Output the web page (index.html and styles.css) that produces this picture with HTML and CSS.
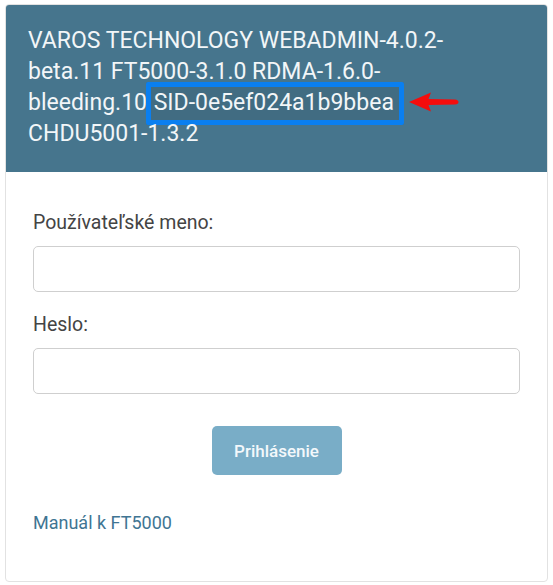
FILE: index.html
```html
<!DOCTYPE html>
<html lang="sk">
<head>
<meta charset="utf-8">
<link rel="stylesheet" href="styles.css">
</head>
<body>
<div class="card">
  <div class="card-header">
    <span class="line">VAROS TECHNOLOGY WEBADMIN-4.0.2-</span>
    <span class="line">beta.11 FT5000-3.1.0 RDMA-1.6.0-</span>
    <span class="line">bleeding.10 <span class="sid">SID-0e5ef024a1b9bbea</span><svg class="arrow" width="52" height="22" viewBox="0 0 52 22"><path d="M1 11 L23 1.5 L20.5 8 L47 8.5 Q50.5 9 50.5 11 Q50.5 13 47 13.5 L20.5 14 L23 20.5 Z" fill="#f40d0d"/></svg></span>
    <span class="line">CHDU5001-1.3.2</span>
  </div>
  <form class="card-body">
    <label class="label">Používateľské meno:</label>
    <input class="input" type="text">
    <label class="label">Heslo:</label>
    <input class="input" type="password">
    <div class="actions"><button class="btn" type="button">Prihlásenie</button></div>
    <a class="link" href="#">Manuál k FT5000</a>
  </form>
</div>
</body>
</html>
```
FILE: styles.css
```css
html, body { margin: 0; padding: 0; background: #ffffff; }
body { padding: 4px 5px 3px 5px; font-family: Roboto, "Liberation Sans", sans-serif; }
.card {
  border: 1px solid #e2e2e2;
  border-radius: 4px;
  overflow: hidden;
  background: #fff;
  height: 578px;
  box-sizing: border-box;
}
.card-header {
  background: #46758d;
  color: #f2f6f8;
  font-size: 23px;
  line-height: 31px;
  padding: 20px 10px 0 22px;
  height: 167px;
  box-sizing: border-box;
}
.line { display: block; white-space: nowrap; }
.sid {
  border: 5px solid #0a7ff0;
  border-radius: 2px;
  padding: 2px 5px 4px 3px;
  margin-left: -7px;
  background: #416c82;
}
.arrow { vertical-align: -3px; margin-left: 4px; }
.card-body {
  display: flex;
  flex-direction: column;
  padding: 40px 27px 0 27px;
}
.label { font-size: 19.5px; line-height: 22px; color: #444; margin-bottom: 12px; }
.input {
  height: 46px;
  border: 1px solid #cfcfcf;
  border-radius: 5px;
  box-sizing: border-box;
  margin-bottom: 22px;
}
.actions { display: flex; justify-content: center; margin-top: 10px; }
.btn {
  width: 130px; height: 49px;
  background: #79adc7;
  border: none; border-radius: 5px;
  color: #f3f8fb;
  font-family: Roboto, "Liberation Sans", sans-serif;
  font-size: 17px;
  font-weight: 500;
}
.link { margin-top: 37px; color: #3f7593; text-decoration: none; font-size: 18px; line-height: 22px; align-self: flex-start; }
```
